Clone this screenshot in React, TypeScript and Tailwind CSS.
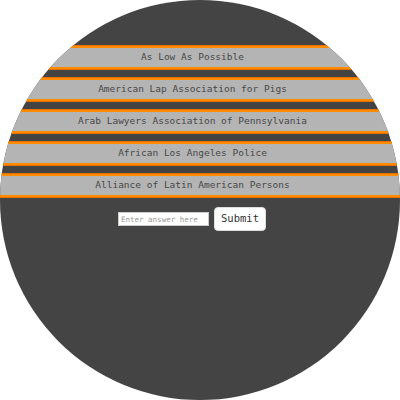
import { FC } from 'react';

const answers = [
  'As Low As Possible',
  'American Lap Association for Pigs',
  'Arab Lawyers Association of Pennsylvania',
  'African Los Angeles Police',
  'Alliance of Latin American Persons',
];

const mono = { fontFamily: '"DejaVu Sans Mono", "Liberation Mono", monospace' };

const AnswerBar: FC<{ label: string }> = ({ label }) => (
  <div className="border-y border-[#e87000]">
    <div className="border-y-2 border-[#ff8c00]">
      <div className="flex h-[19px] items-center justify-center bg-[#b4b4b4] pr-[15px] text-[9.5px] text-[#484848]">
        {label}
      </div>
    </div>
  </div>
);

export default function App() {
  return (
    <div className="h-[400px] w-[400px] bg-white" style={mono}>
      <div className="flex h-[400px] w-[400px] flex-col overflow-hidden rounded-full bg-[#444444] pt-[45px]">
        {/* Answer options */}
        <div className="flex flex-col gap-[7px]">
          {answers.map(a => (
            <AnswerBar key={a} label={a} />
          ))}
        </div>

        {/* Answer form */}
        <div className="mt-[9px] flex items-center justify-center gap-[5px] pr-[16px]">
          <input
            className="h-[14px] w-[91px] border border-[#cccccc] bg-white px-[2px] text-[7.5px] text-[#333] placeholder:text-[#999999] focus:outline-none"
            placeholder="Enter answer here"
            style={mono}
          />
          <button
            className="h-[24px] w-[52px] rounded-[4px] border border-[#dddddd] bg-white text-[10.5px] text-[#333333]"
            style={mono}
          >
            Submit
          </button>
        </div>
      </div>
    </div>
  );
}
